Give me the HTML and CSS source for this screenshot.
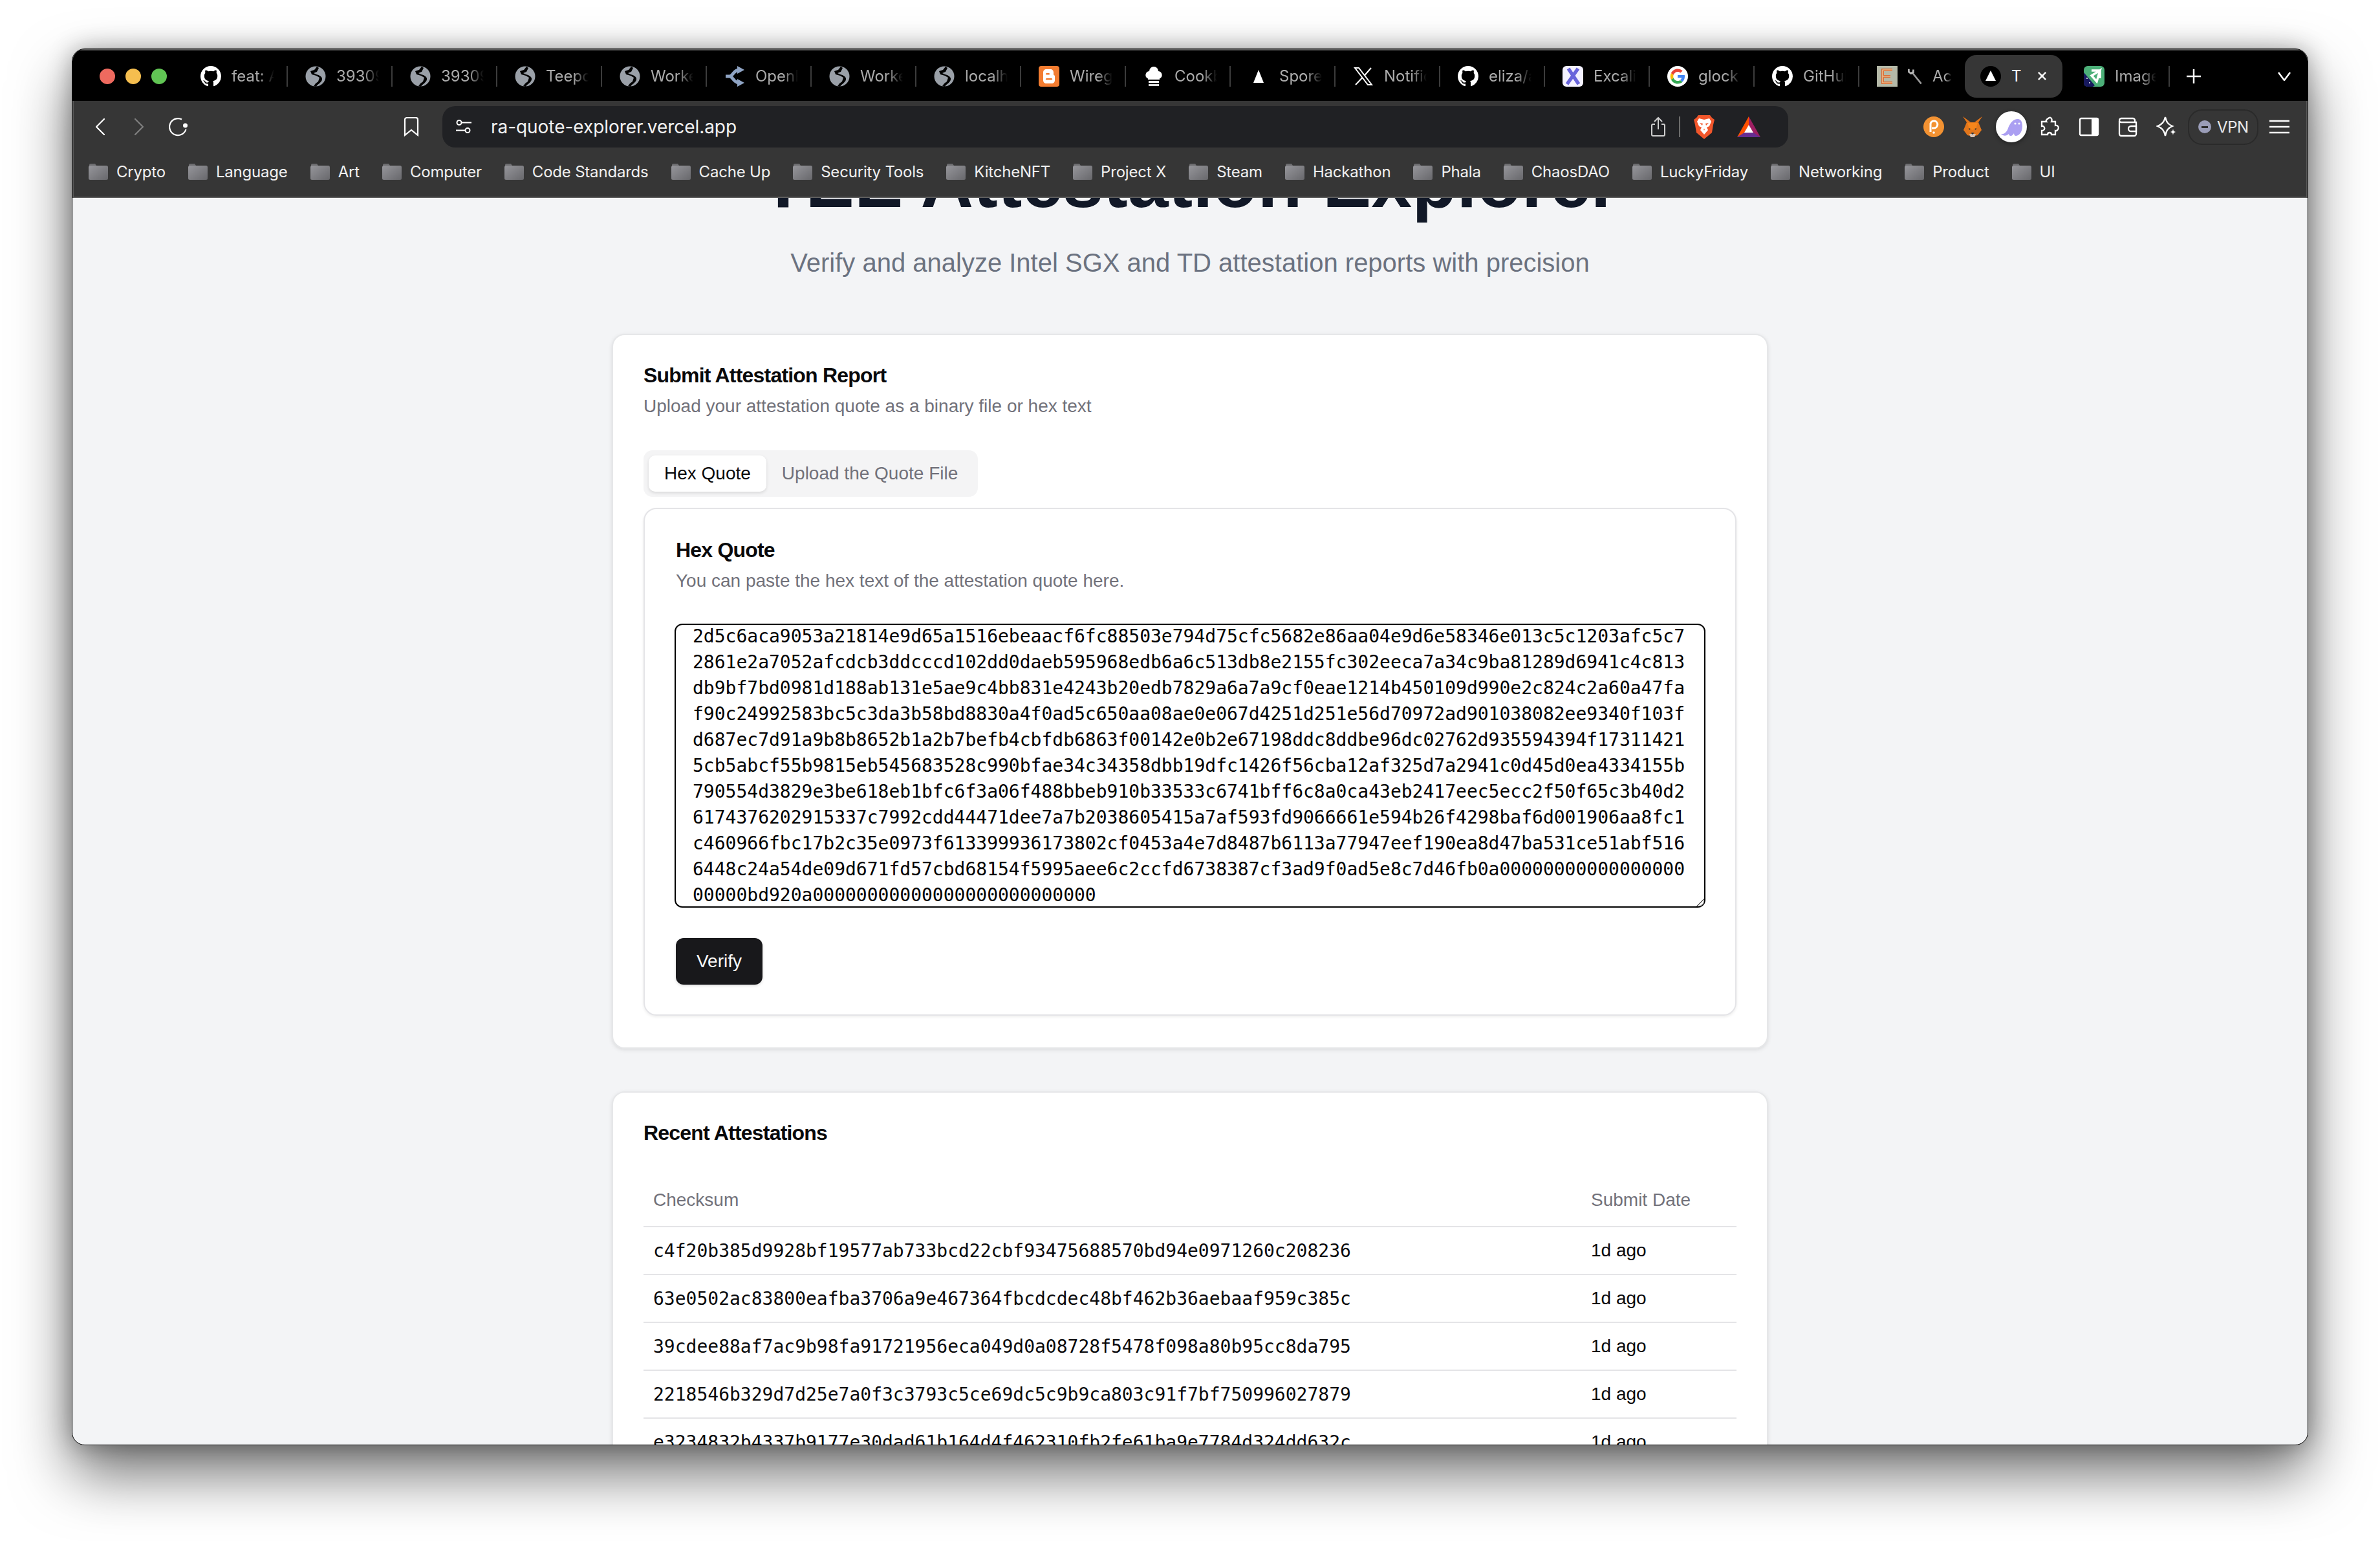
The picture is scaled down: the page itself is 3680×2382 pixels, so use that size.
FILE: index.html
```html
<!DOCTYPE html>
<html lang="en">
<head>
<meta charset="utf-8">
<title>TEE Attestation Explorer</title>
<link rel="stylesheet" href="styles.css">
</head>
<body>
<svg class="defs" xmlns="http://www.w3.org/2000/svg">
  <defs>
    <linearGradient id="folderGrad" x1="0" y1="0" x2="1" y2="1"><stop offset="0" stop-color="#96969b"/><stop offset="1" stop-color="#68686c"/></linearGradient>
    <symbol id="github" viewBox="0 0 16 16"><path fill="#fff" d="M8 0C3.58 0 0 3.58 0 8c0 3.54 2.29 6.53 5.47 7.59.4.07.55-.17.55-.38 0-.19-.01-.82-.01-1.49-2.01.37-2.53-.49-2.69-.94-.09-.23-.48-.94-.82-1.13-.28-.15-.68-.52-.01-.53.63-.01 1.08.58 1.23.82.72 1.21 1.87.87 2.33.66.07-.52.28-.87.51-1.07-1.78-.2-3.64-.89-3.64-3.95 0-.87.31-1.59.82-2.15-.08-.2-.36-1.02.08-2.12 0 0 .67-.21 2.2.82.64-.18 1.32-.27 2-.27.68 0 1.36.09 2 .27 1.53-1.04 2.2-.82 2.2-.82.44 1.1.16 1.92.08 2.12.51.56.82 1.27.82 2.15 0 3.07-1.87 3.75-3.65 3.95.29.25.54.73.54 1.48 0 1.07-.01 1.93-.01 2.2 0 .21.15.46.55.38A8.013 8.013 0 0016 8c0-4.42-3.58-8-8-8z"/></symbol>
    <symbol id="globe" viewBox="0 0 32 32"><circle cx="16" cy="16" r="15.5" fill="#9aa0a8"/><path fill="#000" d="M18 1l-4 5-6 2 2 5 7 2 5 3-2 6-4 3-3 4 4 1c2-4 8-6 9-11 1-4-4-7-9-8l-4-2 5-2 3-6z"/></symbol>
    <symbol id="openrouter" viewBox="0 0 32 32"><path fill="none" stroke="#8fa4c4" stroke-width="5" d="M2 16h6c5 0 6-9 14-10M8 16c5 0 6 9 14 10"/><path fill="#8fa4c4" d="M20 0l11 6-11 6zM20 20l11 6-11 6z"/></symbol>
    <symbol id="blogger" viewBox="0 0 32 32"><rect width="32" height="32" rx="4" fill="#f37c30"/><path fill="#fff" d="M12 5h6c3 0 5 2 5 5v3c0 1 1 1 2 2v7c0 3-2 5-5 5h-8c-3 0-5-2-5-5V10c0-3 2-5 5-5z"/><rect x="11" y="11" width="6" height="2.5" rx="1.2" fill="#f37c30"/><rect x="11" y="19" width="10" height="2.5" rx="1.2" fill="#f37c30"/></symbol>
    <symbol id="chef" viewBox="0 0 32 32"><path fill="#fff" d="M9 8a7 7 0 0 1 14 0 6 6 0 0 1 2 11.500V21H7v-1.500A6 6 0 0 1 9 8z"/><rect x="8" y="23" width="16" height="3" fill="#fff"/><rect x="8" y="28" width="16" height="3" fill="#ddd"/></symbol>
    <symbol id="spore" viewBox="0 0 32 32"><path fill="#fff" d="M16 6l8 20H8z"/></symbol>
    <symbol id="xlogo" viewBox="0 0 32 32"><path fill="none" stroke="#fff" stroke-width="2" d="M3 3h6l20 26h-6zM28 3L18 14.500M14 18.500L4 29"/></symbol>
    <symbol id="excal" viewBox="0 0 32 32"><rect width="32" height="32" rx="6" fill="#f4f2ff"/><path fill="none" stroke="#6965db" stroke-width="5.500" d="M9 4l16 24M24 4L7 28"/></symbol>
    <symbol id="google" viewBox="0 0 32 32"><circle cx="16" cy="16" r="16" fill="#fff"/><path fill="#4285f4" d="M27 16.300c0-.9-.1-1.600-.2-2.300H16v4.300h6.200c-.3 1.500-1.100 2.700-2.300 3.500l3.600 2.800c2.200-2 3.500-5 3.500-8.300z"/><path fill="#34a853" d="M16 27.500c3 0 5.600-1 7.500-2.700l-3.600-2.800c-1 .7-2.400 1.100-3.900 1.100-3 0-5.500-2-6.400-4.700L5.900 21.200c1.900 3.800 5.800 6.300 10.100 6.300z"/><path fill="#fbbc05" d="M9.600 18.400c-.5-1.500-.5-3.200 0-4.700L5.900 10.900c-1.600 3.100-1.600 6.900 0 10.300z"/><path fill="#ea4335" d="M16 8.900c1.700 0 3.200.6 4.400 1.700l3.200-3.200C21.600 5.600 19 4.500 16 4.500c-4.300 0-8.200 2.500-10.100 6.400l3.700 2.800c.9-2.700 3.400-4.800 6.400-4.800z"/></symbol>
    <symbol id="eicon" viewBox="0 0 32 32"><rect width="32" height="32" fill="#b5b9a8"/><path fill="none" stroke="#d86b34" stroke-width="4" d="M24 6H9v20h15M9 16h12"/><path fill="none" stroke="#f6d8a8" stroke-width="1.200" d="M24 6H9v20h15M9 16h12"/></symbol>
    <symbol id="wrench" viewBox="0 0 32 32"><path fill="none" stroke="#9a9a9a" stroke-width="3" d="M10 8l17 21"/><path fill="none" stroke="#b9b9b9" stroke-width="3" d="M5 3v5l4 3 4-2V4"/></symbol>
    <symbol id="imgicon" viewBox="0 0 32 32"><rect width="32" height="32" rx="6" fill="#4caf78"/><path fill="#17195e" d="M0 10l17 20-3 2H5a5 5 0 0 1-5-5z"/><path fill="none" stroke="#fff" stroke-width="3.500" d="M25 7L12 15l8 9zM12 7h13v12"/><circle cx="5" cy="19" r="1" fill="#fff"/><circle cx="9" cy="26" r="1" fill="#fff"/></symbol>
    <symbol id="vercel" viewBox="0 0 32 32"><circle cx="16" cy="16" r="16" fill="#000"/><path fill="#fff" d="M16 7l8 16H8z"/></symbol>
    <symbol id="folder" viewBox="0 0 30 25"><path fill="#6d6d70" d="M1 2a2 2 0 0 1 2-2h7l2 3v3H1z"/><rect y="3" width="30" height="22" rx="2.500" fill="url(#folderGrad)"/></symbol>
  </defs>
</svg>

<div class="desktop">
  <div class="window">
    <header class="titlebar">
      <div class="lights"><span class="light red"></span><span class="light amber"></span><span class="light green"></span></div>
      <div class="tabs">
        <div class="tab"><svg class="fav"><use href="#github"/></svg><span class="tab-text">feat: Add</span></div>
        <div class="tab"><svg class="fav"><use href="#globe"/></svg><span class="tab-text">39309</span></div>
        <div class="tab"><svg class="fav"><use href="#globe"/></svg><span class="tab-text">39309</span></div>
        <div class="tab"><svg class="fav"><use href="#globe"/></svg><span class="tab-text">Teepod</span></div>
        <div class="tab"><svg class="fav"><use href="#globe"/></svg><span class="tab-text">Workers</span></div>
        <div class="tab"><svg class="fav"><use href="#openrouter"/></svg><span class="tab-text">OpenR</span></div>
        <div class="tab"><svg class="fav"><use href="#globe"/></svg><span class="tab-text">Workers</span></div>
        <div class="tab"><svg class="fav"><use href="#globe"/></svg><span class="tab-text">localhost</span></div>
        <div class="tab"><svg class="fav"><use href="#blogger"/></svg><span class="tab-text">Wireg</span></div>
        <div class="tab"><svg class="fav"><use href="#chef"/></svg><span class="tab-text">Cookb</span></div>
        <div class="tab"><svg class="fav"><use href="#spore"/></svg><span class="tab-text">Spore</span></div>
        <div class="tab"><svg class="fav"><use href="#xlogo"/></svg><span class="tab-text">Notific</span></div>
        <div class="tab"><svg class="fav"><use href="#github"/></svg><span class="tab-text">eliza/a</span></div>
        <div class="tab"><svg class="fav"><use href="#excal"/></svg><span class="tab-text">Excali</span></div>
        <div class="tab"><svg class="fav"><use href="#google"/></svg><span class="tab-text">glock</span></div>
        <div class="tab"><svg class="fav"><use href="#github"/></svg><span class="tab-text">GitHub</span></div>
        <div class="tab tab-tool"><svg class="fav"><use href="#eicon"/></svg><svg class="fav-wrench"><use href="#wrench"/></svg><span class="tab-text tab-text-short">Ac</span></div>
        <div class="tab tab-active"><svg class="fav"><use href="#vercel"/></svg><span class="tab-title">T</span>
          <svg class="tab-close" viewBox="0 0 16 16"><path d="M2 2l12 12M14 2L2 14"/></svg></div>
        <div class="tab tab-image"><svg class="fav"><use href="#imgicon"/></svg><span class="tab-text">Image</span></div>
      </div>
      <svg class="newtab" viewBox="0 0 22 22"><path d="M11 0v22M0 11h22"/></svg>
      <svg class="tablist" viewBox="0 0 20 14"><path d="M1 1l9 12 9-12"/></svg>
    </header>

    <div class="toolbar">
      <svg class="nav nav-back" viewBox="0 0 14 26"><path d="M13 1L1 13l12 12"/></svg>
      <svg class="nav nav-forward" viewBox="0 0 14 26"><path d="M1 1l12 12L1 25"/></svg>
      <svg class="nav-reload" viewBox="0 0 30 30"><path d="M21 3.500A13 13 0 1 0 27.500 19"/><circle cx="26.500" cy="13" r="3.500"/></svg>
      <svg class="nav-bookmark" viewBox="0 0 24 30"><path d="M2 4a3 3 0 0 1 3-3h14a3 3 0 0 1 3 3v24l-10-8-10 8z"/></svg>
      <div class="address">
        <svg class="tune" viewBox="0 0 24 22"><circle cx="5" cy="4.500" r="3.500"/><path d="M9 4.500h15M0 16.500h14"/><circle cx="18" cy="16.500" r="3.500"/></svg>
        <span class="url">ra-quote-explorer.vercel.app</span>
        <div class="addr-right">
          <svg class="share" viewBox="0 0 24 32"><path d="M12 20V2M6 8l6-6 6 6M7 12H4a2 2 0 0 0-2 2v14a2 2 0 0 0 2 2h16a2 2 0 0 0 2-2V14a2 2 0 0 0-2-2h-3"/></svg>
          <span class="addr-sep"></span>
          <svg class="brave" viewBox="0 0 32 38"><path fill="#f1562b" d="M7 1h18l3 4 4 3-2 8-2 12-12 10L4 28 2 16 0 8l4-3z"/><path fill="#fff" d="M8 6l8 2 8-2 3 5-3 7-4 2 2 4-6 7-6-7 2-4-4-2-3-7z"/><path fill="#f1562b" d="M9 13l5 1-1 3zM23 13l-5 1 1 3zM15 22h2l-1 3z"/></svg>
          <svg class="bat" viewBox="0 0 36 32"><path fill="#ff5000" d="M18 0L0 32l11-6 7-12z"/><path fill="#9e1f63" d="M18 0l18 32-11-6-7-12z"/><path fill="#662d91" d="M0 32h36l-11-7H11z"/><path fill="#fff" d="M18 13l7 12H11z"/></svg>
        </div>
      </div>
      <div class="extensions">
        <svg class="ext" viewBox="0 0 32 32"><circle cx="16" cy="16" r="16" fill="#f39232"/><path fill="none" stroke="#fff" stroke-width="3" d="M11 24V11a5.500 5.500 0 1 1 5.500 7H13"/><circle cx="16" cy="25" r="1.800" fill="#fff"/></svg>
        <svg class="ext" viewBox="0 0 32 32"><path fill="#763d16" d="M1 0l12 9H7zM31 0L19 9h6z"/><path fill="#e2761b" d="M1 0l6 9-5 12 6 8 8 2 8-2 6-8-5-12 6-9-12 9h-6z"/><path fill="#f6851b" d="M8 10h16l-3 9-5 2-5-2z"/><path fill="#d7c1b3" d="M11 27h10l-2 5h-6z"/><path fill="#233447" d="M13 25h6l-3 3z"/><path fill="#333" d="M10 18l3 1-2 2zM22 18l-3 1 2 2z"/></svg>
        <svg class="ext ext-phantom" viewBox="0 0 48 48"><circle cx="24" cy="24" r="24" fill="#fff"/><path fill="#ab9ff2" d="M8 35c5 1 9-3 11-9 3-8 8-14 15-14 5 0 7 5 7 11 0 10-6 15-10 15-2 0-3-2-3-4-1 2-3 4-5 4-2 0-3-2-3-3-3 3-8 4-12 0z"/><circle cx="30" cy="19" r="1.600" fill="#fff"/><circle cx="36" cy="19" r="1.600" fill="#fff"/></svg>
        <svg class="ext ext-line" viewBox="0 0 32 32"><path d="M13 3c3-3 7 0 5 5h6v6c4-1 6 3 4 6s-4 2-4 2v6h-6c0-4-6-4-6 0H3v-6c3 0 5-2 4-5s-4-2-4-2V8h7c-1-1 0-3 3-5z"/></svg>
        <svg class="ext ext-line" viewBox="0 0 32 32"><rect x="2" y="3" width="28" height="26" rx="2"/><path class="solid" d="M20 3h10v26H20z"/></svg>
        <svg class="ext ext-line" viewBox="0 0 32 32"><path d="M3 7v20a3 3 0 0 0 3 3h20a3 3 0 0 0 3-3V9H6a3 3 0 0 1-3-3 3 3 0 0 1 3-3h18a3 3 0 0 1 3 3v3"/><path d="M29 15h-8a4 4 0 0 0 0 8h8z"/></svg>
        <svg class="ext ext-line" viewBox="0 0 32 32"><path d="M14 1c2 8 4 11 11 14-7 3-9 6-11 15-2-9-5-12-12-15 7-3 10-6 12-14z"/><path class="solid" d="M26 19c.5 3 1 4 4 5-3 1-3.500 2-4 5-.5-3-1-4-4-5 3-1 3.500-2 4-5z"/></svg>
      </div>
      <div class="vpn"><span class="vpn-dot"></span><span class="vpn-text">VPN</span></div>
      <svg class="hamburger" viewBox="0 0 31 22"><path d="M0 2h31M0 11h31M0 20h31"/></svg>
    </div>

    <nav class="bookmarks">
      <a class="bm"><svg class="bm-folder"><use href="#folder"/></svg>Crypto</a>
      <a class="bm"><svg class="bm-folder"><use href="#folder"/></svg>Language</a>
      <a class="bm"><svg class="bm-folder"><use href="#folder"/></svg>Art</a>
      <a class="bm"><svg class="bm-folder"><use href="#folder"/></svg>Computer</a>
      <a class="bm"><svg class="bm-folder"><use href="#folder"/></svg>Code Standards</a>
      <a class="bm"><svg class="bm-folder"><use href="#folder"/></svg>Cache Up</a>
      <a class="bm"><svg class="bm-folder"><use href="#folder"/></svg>Security Tools</a>
      <a class="bm"><svg class="bm-folder"><use href="#folder"/></svg>KitcheNFT</a>
      <a class="bm"><svg class="bm-folder"><use href="#folder"/></svg>Project X</a>
      <a class="bm"><svg class="bm-folder"><use href="#folder"/></svg>Steam</a>
      <a class="bm"><svg class="bm-folder"><use href="#folder"/></svg>Hackathon</a>
      <a class="bm"><svg class="bm-folder"><use href="#folder"/></svg>Phala</a>
      <a class="bm"><svg class="bm-folder"><use href="#folder"/></svg>ChaosDAO</a>
      <a class="bm"><svg class="bm-folder"><use href="#folder"/></svg>LuckyFriday</a>
      <a class="bm"><svg class="bm-folder"><use href="#folder"/></svg>Networking</a>
      <a class="bm"><svg class="bm-folder"><use href="#folder"/></svg>Product</a>
      <a class="bm"><svg class="bm-folder"><use href="#folder"/></svg>UI</a>
    </nav>

    <main class="page">
      <h1 class="hero-title">TEE Attestation Explorer</h1>
      <p class="hero-sub">Verify and analyze Intel SGX and TD attestation reports with precision</p>

      <section class="card card-submit">
        <h2 class="card-title">Submit Attestation Report</h2>
        <p class="card-desc">Upload your attestation quote as a binary file or hex text</p>
        <div class="switch">
          <button class="switch-btn is-on">Hex Quote</button>
          <button class="switch-btn">Upload the Quote File</button>
        </div>
        <div class="inner">
          <h3 class="card-title">Hex Quote</h3>
          <p class="card-desc">You can paste the hex text of the attestation quote here.</p>
          <div class="quote" role="textbox" aria-multiline="true">
            <div class="quote-lines">
              <div>2d5c6aca9053a21814e9d65a1516ebeaacf6fc88503e794d75cfc5682e86aa04e9d6e58346e013c5c1203afc5c7</div>
              <div>2861e2a7052afcdcb3ddcccd102dd0daeb595968edb6a6c513db8e2155fc302eeca7a34c9ba81289d6941c4c813</div>
              <div>db9bf7bd0981d188ab131e5ae9c4bb831e4243b20edb7829a6a7a9cf0eae1214b450109d990e2c824c2a60a47fa</div>
              <div>f90c24992583bc5c3da3b58bd8830a4f0ad5c650aa08ae0e067d4251d251e56d70972ad901038082ee9340f103f</div>
              <div>d687ec7d91a9b8b8652b1a2b7befb4cbfdb6863f00142e0b2e67198ddc8ddbe96dc02762d935594394f17311421</div>
              <div>5cb5abcf55b9815eb545683528c990bfae34c34358dbb19dfc1426f56cba12af325d7a2941c0d45d0ea4334155b</div>
              <div>790554d3829e3be618eb1bfc6f3a06f488bbeb910b33533c6741bff6c8a0ca43eb2417eec5ecc2f50f65c3b40d2</div>
              <div>6174376202915337c7992cdd44471dee7a7b2038605415a7af593fd9066661e594b26f4298baf6d001906aa8fc1</div>
              <div>c460966fbc17b2c35e0973f613399936173802cf0453a4e7d8487b6113a77947eef190ea8d47ba531ce51abf516</div>
              <div>6448c24a54de09d671fd57cbd68154f5995aee6c2ccfd6738387cf3ad9f0ad5e8c7d46fb0a00000000000000000</div>
              <div>00000bd920a00000000000000000000000000</div>
            </div>
          </div>
          <button class="verify">Verify</button>
        </div>
      </section>

      <section class="card card-recent">
        <h2 class="card-title">Recent Attestations</h2>
        <table class="recent">
          <thead>
            <tr><th class="col-sum">Checksum</th><th class="col-date">Submit Date</th></tr>
          </thead>
          <tbody>
            <tr><td class="sum">c4f20b385d9928bf19577ab733bcd22cbf93475688570bd94e0971260c208236</td><td>1d ago</td></tr>
            <tr><td class="sum">63e0502ac83800eafba3706a9e467364fbcdcdec48bf462b36aebaaf959c385c</td><td>1d ago</td></tr>
            <tr><td class="sum">39cdee88af7ac9b98fa91721956eca049d0a08728f5478f098a80b95cc8da795</td><td>1d ago</td></tr>
            <tr><td class="sum">2218546b329d7d25e7a0f3c3793c5ce69dc5c9b9ca803c91f7bf750996027879</td><td>1d ago</td></tr>
            <tr><td class="sum">e3234832b4337b9177e30dad61b164d4f462310fb2fe61ba9e7784d324dd632c</td><td>1d ago</td></tr>
          </tbody>
        </table>
      </section>
    </main>
  </div>
</div>
</body>
</html>
```
FILE: styles.css
```css
* { box-sizing: border-box; }
html, body { margin: 0; height: 100%; background: #fff; overflow: hidden; }
body { font-family: "Liberation Sans", Arial, sans-serif; color: #000; }
.defs { display: block; width: 0; height: 0; }

.desktop { height: 2382px; padding: 75px 111px 148px 111px; }
.window {
  height: 100%;
  display: flex;
  flex-direction: column;
  border: 1px solid #000;
  border-radius: 20px;
  overflow: hidden;
  background: #f3f4f6;
  box-shadow: 0 44px 90px rgba(0,0,0,.56), 0 0 36px rgba(0,0,0,.3);
}

/* Title bar */
.titlebar {
  flex: none;
  height: 80px;
  display: flex;
  align-items: center;
  background: #000;
  padding: 3px 0 0 42px;
  box-shadow: inset 0 2px #5a5a5a;
}
.lights { display: flex; gap: 16px; margin-right: 25px; }
.light { width: 24px; height: 24px; border-radius: 50%; }
.red { background: #ee6a5f; }
.amber { background: #f5be4f; }
.green { background: #61c554; }

.tabs { display: flex; align-items: center; }
.tab {
  width: 162px;
  height: 32px;
  display: flex;
  align-items: center;
  padding-left: 27px;
  border-right: 2px solid #3c3c3c;
  font: 24px Inter, "Liberation Sans", sans-serif;
  color: #ababab;
}
.fav { width: 32px; height: 32px; flex: none; }
.tab-text {
  margin-left: 16px;
  width: 66px;
  overflow: hidden;
  white-space: nowrap;
  -webkit-mask-image: linear-gradient(to right, #000 65%, transparent);
  mask-image: linear-gradient(to right, #000 65%, transparent);
}
.tab-tool { border-right: none; width: 162px; }
.fav-wrench { width: 28px; height: 32px; flex: none; margin-left: 13px; }
.tab-text-short { margin-left: 13px; width: 30px; }
.tab-active {
  width: 151px;
  height: 66px;
  margin-left: 1px;
  padding-left: 24px;
  border: none;
  border-radius: 18px;
  background: #363636;
  color: #fff;
}
.tab-title { margin-left: 16px; }
.tab-close { width: 15px; height: 15px; margin-left: 24px; fill: none; stroke: #fff; stroke-width: 2.500; }
.tab-image { width: 166px; padding-left: 33px; }
.tab-image .tab-text { width: 64px; }
.newtab { width: 22px; height: 22px; margin-left: 26px; fill: none; stroke: #fff; stroke-width: 2.500; }
.tablist { width: 20px; height: 14px; margin: 0 26px 0 auto; fill: none; stroke: #fff; stroke-width: 2.500; }

/* Toolbar */
.toolbar {
  flex: none;
  height: 80px;
  display: flex;
  align-items: center;
  padding-left: 36px;
  background: #363636;
  box-shadow: inset 2px 0 #5a5a5a, inset -2px 0 #5a5a5a;
}
.nav { width: 14px; height: 26px; fill: none; stroke: #fff; stroke-width: 2.200; stroke-linecap: round; stroke-linejoin: round; }
.nav-forward { margin-left: 46px; stroke: #808080; }
.nav-reload { width: 30px; height: 30px; margin-left: 38px; fill: none; stroke: #fff; stroke-width: 2.200; }
.nav-reload circle { fill: #fff; stroke: none; }
.nav-bookmark { width: 24px; height: 30px; margin-left: 334px; fill: none; stroke: #fff; stroke-width: 2.200; }
.address {
  width: 2081px;
  height: 64px;
  margin-left: 36px;
  display: flex;
  align-items: center;
  padding-left: 21px;
  background: #202124;
  border-radius: 20px;
}
.tune { width: 24px; height: 22px; fill: none; stroke: #fff; stroke-width: 2; }
.url { margin-left: 30px; font: 28px Inter, "Liberation Sans", sans-serif; letter-spacing: -.05px; color: #f2f2f2; }
.addr-right { margin-left: auto; display: flex; align-items: center; padding-right: 43px; }
.share { width: 24px; height: 32px; fill: none; stroke: #cfcfcf; stroke-width: 2; }
.addr-sep { width: 2px; height: 32px; margin: 0 21px 0 20px; background: #6c6c6c; }
.brave { width: 32px; height: 38px; }
.bat { width: 36px; height: 32px; margin-left: 35px; }

.extensions { display: flex; align-items: center; gap: 28px; margin-left: 209px; }
.ext { width: 32px; height: 32px; display: block; }
.ext-phantom { width: 48px; height: 48px; margin: 0 -8px; filter: drop-shadow(0 2px 3px rgba(0,0,0,.4)); }
.ext-line { fill: none; stroke: #fff; stroke-width: 2.300; }
.ext-line .solid { fill: #fff; stroke: none; }
.vpn {
  width: 109px;
  height: 55px;
  margin-left: 17px;
  display: flex;
  align-items: center;
  gap: 9px;
  padding-left: 14px;
  border: 2px solid #2a2a2a;
  border-radius: 22px;
  font: 24px Inter, "Liberation Sans", sans-serif;
  letter-spacing: -.4px;
  color: #e8e8e8;
}
.vpn-dot {
  position: relative;
  width: 20px;
  height: 20px;
  border-radius: 50%;
  background: #9a9db8;
}
.vpn-dot::after {
  content: "";
  position: absolute;
  left: 5px;
  top: 8.500px;
  width: 10px;
  height: 3px;
  background: #2b2b2b;
}
.hamburger { width: 31px; height: 22px; margin-left: 17px; stroke: #fff; stroke-width: 2.400; }

/* Bookmarks */
.bookmarks {
  flex: none;
  height: 70px;
  display: flex;
  align-items: center;
  gap: 35px;
  padding: 0 0 10px 25px;
  background: #363636;
  border-bottom: 2px solid #5f5f5f;
  box-shadow: inset 2px 0 #5a5a5a, inset -2px 0 #5a5a5a;
  font: 24px Inter, "Liberation Sans", sans-serif;
  letter-spacing: -.2px;
  color: #f0f0f0;
}
.bm { display: flex; align-items: center; gap: 13px; white-space: nowrap; }
.bm-folder { width: 30px; height: 25px; flex: none; }

/* Page */
.page { flex: 1; min-height: 0; overflow: hidden; display: flex; flex-direction: column; align-items: center; }
.hero-title {
  flex: none;
  margin: -81px 0 0;
  font-size: 113px;
  line-height: 112px;
  font-weight: 700;
  color: #111827;
  white-space: nowrap;
}
.hero-sub {
  flex: none;
  margin: 41px 0 0;
  font-size: 40px;
  line-height: 56px;
  color: #6b7280;
}
.card {
  flex: none;
  width: 1788px;
  background: #fff;
  border: 2px solid #e6e7e9;
  border-radius: 20px;
  box-shadow: 0 2px 6px rgba(0,0,0,.1);
  padding: 42px 47px 49px;
}
.card-submit { margin-top: 82px; }
.card-recent { margin-top: 66px; padding-bottom: 0; }
.card-title {
  margin: 0;
  font-size: 32px;
  line-height: 40px;
  font-weight: 700;
  letter-spacing: -.8px;
  color: #09090b;
}
.card-desc {
  margin: 8px 0 0;
  font-size: 28px;
  line-height: 40px;
  color: #71717a;
}
.switch {
  display: flex;
  width: 517px;
  height: 72px;
  margin-top: 48px;
  padding: 8px;
  background: #f4f4f5;
  border-radius: 14px;
}
.switch-btn {
  flex: none;
  height: 56px;
  padding: 0 24px;
  border: 0;
  border-radius: 10px;
  background: none;
  font: 28px "Liberation Sans", Arial, sans-serif;
  color: #71717a;
  white-space: nowrap;
}
.switch-btn.is-on {
  background: #fff;
  color: #09090b;
  box-shadow: 0 2px 5px rgba(0,0,0,.12);
}
.inner {
  margin-top: 17px;
  height: 785px;
  padding: 43px 47px 0 48px;
  border: 2px solid #e4e4e7;
  border-radius: 20px;
  box-shadow: 0 2px 4px rgba(0,0,0,.07);
}
.quote {
  width: 1594px;
  height: 439px;
  margin: 46px 0 0 -2px;
  padding: 0 26px;
  border: 2.500px solid #000;
  border-radius: 12px;
  overflow: hidden;
  resize: both;
  background: #fff;
}
.quote::-webkit-resizer {
  background: linear-gradient(135deg, transparent 0 58%, #666 58% 64%, transparent 64% 78%, #666 78% 84%, transparent 84%);
}
.quote-lines {
  margin-top: -2px;
  font: 28px/40px "DejaVu Sans Mono", monospace;
  color: #000;
  white-space: nowrap;
}
.verify {
  display: block;
  width: 134px;
  height: 72px;
  margin-top: 47px;
  border: 0;
  border-radius: 12px;
  background: #18181b;
  color: #fafafa;
  font: 28px "Liberation Sans", Arial, sans-serif;
  box-shadow: 0 2px 4px rgba(0,0,0,.12);
}

.recent {
  width: 1690px;
  margin-top: 44px;
  border-collapse: collapse;
  table-layout: fixed;
}
.recent th {
  height: 81px;
  padding: 0 0 0 15px;
  text-align: left;
  vertical-align: middle;
  font-size: 28px;
  font-weight: 400;
  color: #71717a;
  border-bottom: 2px solid #e4e4e7;
}
.col-sum { width: 1450px; }
.recent td {
  height: 74px;
  padding: 0 0 0 15px;
  font-size: 28px;
  color: #09090b;
  border-bottom: 2px solid #e4e4e7;
}
.recent td.sum { font-family: "DejaVu Sans Mono", monospace; }
```
